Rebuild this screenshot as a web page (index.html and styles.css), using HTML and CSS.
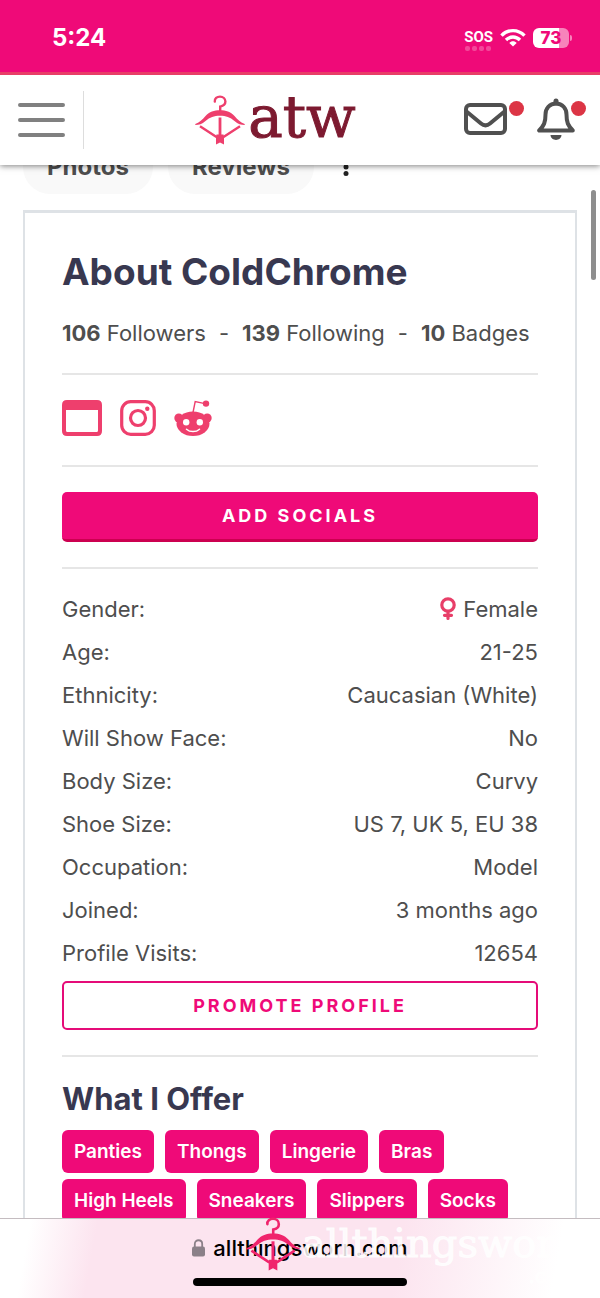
FILE: index.html
```html
<!DOCTYPE html>
<html lang="en">
<head>
    <meta charset="UTF-8">
    <meta name="viewport" content="width=device-width, initial-scale=1.0">
    <title>About ColdChrome</title>
    <link rel="stylesheet" href="styles.css">
</head>
<body>
    <svg class="defs" aria-hidden="true">
        <symbol id="bow" viewBox="0 0 50 50">
            <path d="M19.800 6.600C19.400 3.600 22 1.600 25 1.600C28 1.600 30.400 3.800 30.400 6.600C30.400 9.600 28.200 11 25.200 11.600V17" fill="none" stroke="currentColor" stroke-width="2.400" stroke-linecap="round"/>
            <path d="M.3 29C5 27 7.500 24.500 10.500 21C14.500 16.800 19 15.200 25 15.200S35.500 16.800 39.500 21C42.500 24.500 45 27 49.700 29V30C46 30 43 29 39.500 26C35 22.300 31 20.800 25 20.800S15 22.300 10.500 26C7 29 4 30 .3 30Z" fill="currentColor"/>
            <path d="M5 31.200L21.500 42M45 31.200L28.500 42" fill="none" stroke="currentColor" stroke-width="2.400"/>
            <path d="M25 22.500V42" fill="none" stroke="currentColor" stroke-width="2.800"/>
            <path d="M21.500 39.500H28.500L29 41.500V49.500L25 47.500L21 49.500V41.500Z" fill="currentColor"/>
        </symbol>
    </svg>

    <header>
        <div class="status-bar">
            <span class="time">5:24</span>
            <div class="status-icons">
                <div class="sos">
                    <span>SOS</span>
                    <svg width="28" height="5" viewBox="0 0 28 5" fill="#fff" opacity=".25"><rect x="1" width="5" height="5" rx="2"/><rect x="8" width="5" height="5" rx="2"/><rect x="15" width="5" height="5" rx="2"/><rect x="22" width="5" height="5" rx="2"/></svg>
                </div>
                <svg width="26" height="20" viewBox="0 0 26 20" fill="none" stroke="#fff" stroke-width="3.400">
                    <path d="M1.500 7.600C8 .9 18 .9 24.500 7.600"/>
                    <path d="M6 12C10 8 16 8 20 12"/>
                    <path d="M13 18.500L9.300 14.900C11.300 12.800 14.700 12.800 16.700 14.900Z" fill="#fff" stroke="none"/>
                </svg>
                <div class="battery"><span>73</span></div>
            </div>
        </div>
        <nav class="navbar">
            <button class="menu-btn" aria-label="Menu">
                <svg width="47" height="36" viewBox="0 0 47 36" stroke="#808080" stroke-width="4" stroke-linecap="round"><path d="M2 3H45M2 18H45M2 33H45"/></svg>
            </button>
            <a class="logo" href="#">
                <svg width="50" height="50"><use href="#bow"/></svg>
                <span>atw</span>
            </a>
            <div class="nav-actions">
                <a class="notify" href="#" aria-label="Messages">
                    <svg width="43" height="44" viewBox="0 0 43 44" fill="none" stroke="#505050" stroke-width="4">
                        <rect x="2" y="7" width="39" height="28" rx="4"/>
                        <path d="M2.500 13.500L17 25.500C20 28 23 28 26 25.500L40.500 13.500"/>
                    </svg>
                </a>
                <a class="notify" href="#" aria-label="Notifications">
                    <svg width="38" height="44" viewBox="0 0 38 44" fill="none" stroke="#505050" stroke-width="4">
                        <path d="M19 5.500C12.500 5.500 8.500 10.500 8.500 16.500C8.500 24.500 7 27.500 2.200 32.500H35.800C31 27.500 29.500 24.500 29.500 16.500C29.500 10.500 25.500 5.500 19 5.500Z" stroke-linejoin="round"/>
                        <path d="M19 5V3" stroke-width="5" stroke-linecap="round"/>
                        <path d="M13.500 37H24.500C24 43.500 14 43.500 13.500 37Z" fill="#505050" stroke="none"/>
                    </svg>
                </a>
            </div>
        </nav>
    </header>

    <main>
        <div class="tabs">
            <a href="#">Photos</a>
            <a href="#">Reviews</a>
            <button class="more-btn" aria-label="More">
                <svg width="6" height="18" viewBox="0 0 6 18" fill="#222"><circle cx="3" cy="2.500" r="2.500"/><circle cx="3" cy="9" r="2.500"/><circle cx="3" cy="15.500" r="2.500"/></svg>
            </button>
        </div>

        <section class="card">
            <h1>About ColdChrome</h1>
            <p class="stats"><span><b>106</b> Followers</span><span>-</span><span><b>139</b> Following</span><span>-</span><span><b>10</b> Badges</span></p>
            <hr>
            <div class="socials">
                <a href="#" aria-label="Website">
                    <svg width="40" height="36" viewBox="0 0 40 36"><path d="M5 0H35Q40 0 40 5V31Q40 36 35 36H5Q0 36 0 31V5Q0 0 5 0ZM4 10V30.500Q4 32 5.500 32H34.500Q36 32 36 30.500V10Z" fill="currentColor" fill-rule="evenodd"/></svg>
                </a>
                <a href="#" aria-label="Instagram">
                    <svg width="36" height="36" viewBox="0 0 36 36" fill="none" stroke="currentColor" stroke-width="3.200"><rect x="1.700" y="1.700" width="32.600" height="32.600" rx="9"/><circle cx="18" cy="18" r="7.500"/><circle cx="27.300" cy="8.700" r="2.200" fill="currentColor" stroke="none"/></svg>
                </a>
                <a href="#" aria-label="Reddit">
                    <svg width="38" height="36" viewBox="0 0 38 36" fill="currentColor">
                        <path d="M19 12.500L21.200 1.600L31 3.600" fill="none" stroke="currentColor" stroke-width="1.400"/>
                        <circle cx="32" cy="3.600" r="3.200"/>
                        <circle cx="4.800" cy="18" r="4.500"/><circle cx="33.200" cy="18" r="4.500"/>
                        <ellipse cx="19" cy="23.800" rx="16.500" ry="12.200"/>
                        <g fill="#fff"><circle cx="12.200" cy="22.200" r="3.200"/><circle cx="25.800" cy="22.200" r="3.200"/></g>
                        <path d="M12.500 29.200C16 32.400 22 32.400 25.500 29.200" fill="none" stroke="#fff" stroke-width="1.500" stroke-linecap="round"/>
                    </svg>
                </a>
            </div>
            <hr>
            <button class="btn btn-primary">Add Socials</button>
            <hr>
            <dl class="details">
                <div><dt>Gender:</dt><dd><svg width="16" height="24" viewBox="0 0 16 24" fill="none" stroke="#e83e68" stroke-width="3.200"><circle cx="8" cy="8" r="6.200"/><path d="M8 14.500V21.500M4.500 18.300H11.500" stroke-linecap="round"/></svg>Female</dd></div>
                <div><dt>Age:</dt><dd>21-25</dd></div>
                <div><dt>Ethnicity:</dt><dd>Caucasian (White)</dd></div>
                <div><dt>Will Show Face:</dt><dd>No</dd></div>
                <div><dt>Body Size:</dt><dd>Curvy</dd></div>
                <div><dt>Shoe Size:</dt><dd>US 7, UK 5, EU 38</dd></div>
                <div><dt>Occupation:</dt><dd>Model</dd></div>
                <div><dt>Joined:</dt><dd>3 months ago</dd></div>
                <div><dt>Profile Visits:</dt><dd>12654</dd></div>
            </dl>
            <button class="btn btn-outline">Promote Profile</button>
            <hr>
            <h2>What I Offer</h2>
            <div class="tags">
                <a href="#">Panties</a>
                <a href="#">Thongs</a>
                <a href="#">Lingerie</a>
                <a href="#">Bras</a>
                <a href="#">High Heels</a>
                <a href="#">Sneakers</a>
                <a href="#">Slippers</a>
                <a href="#">Socks</a>
            </div>
        </section>
        <div class="scroll-thumb"></div>
    </main>

    <footer>
        <div class="address">
            <svg width="13" height="18" viewBox="0 0 13 18"><rect y="7.500" width="13" height="10" rx="2" fill="#8b8088"/><path d="M2.800 8V5C2.800 0 10.200 0 10.200 5V8" fill="none" stroke="#8b8088" stroke-width="1.800"/></svg>
            <span>allthingsworn.com</span>
        </div>
        <div class="home-bar"></div>
        <div class="watermark">
            <svg width="54" height="54"><use href="#bow"/></svg>
            <div class="watermark-text">allthingsworn<small>.com</small></div>
        </div>
    </footer>
</body>
</html>
```
FILE: styles.css
```css
* {
    box-sizing: border-box;
}
body {
    display: flex;
    flex-direction: column;
    height: 100vh;
    margin: 0;
    overflow: hidden;
    background: #fff;
    color: #4e4e4e;
    font-family: Inter, sans-serif;
    font-size: 22px;
    line-height: 30px;
}
a {
    color: inherit;
    text-decoration: none;
}
button {
    padding: 0;
    border: none;
    background: none;
    font-family: inherit;
    cursor: pointer;
}
svg {
    display: block;
    flex: none;
}
.defs {
    position: absolute;
    width: 0;
    height: 0;
}

/* Header */
header {
    position: relative;
    z-index: 1;
    flex: none;
    background: #fff;
    box-shadow: 0 1px 6px rgba(0, 0, 0, 0.5);
}
.status-bar {
    display: flex;
    justify-content: space-between;
    align-items: center;
    height: 75px;
    padding: 4px 31px 0 52px;
    border-bottom: 3px solid #e83e68;
    background: #ef0a78;
    color: #fff;
}
.time {
    font-size: 24px;
    font-weight: 700;
}
.status-icons {
    display: flex;
    align-items: center;
    gap: 7px;
}
.sos {
    padding-top: 3px;
    font-family: Roboto, sans-serif;
    font-size: 15px;
    font-weight: 700;
    line-height: 17px;
}
.battery {
    position: relative;
    width: 36px;
    height: 20px;
    border-radius: 6px;
    background: linear-gradient(90deg, #fff 73%, #f784bb 73%);
    color: #ef0a78;
    font-size: 17px;
    font-weight: 800;
    line-height: 20px;
    text-align: center;
}
.battery::after {
    content: "";
    position: absolute;
    top: 7px;
    right: -3px;
    width: 2px;
    height: 6px;
    border-radius: 0 2px 2px 0;
    background: #f784bb;
}
.navbar {
    display: flex;
    align-items: center;
    height: 90px;
    padding: 0 25px 0 18px;
}
.menu-btn {
    display: flex;
    align-items: center;
    width: 66px;
    height: 58px;
    border-right: 1px solid #ddd;
}
.logo {
    display: flex;
    flex: 1;
    align-items: center;
    justify-content: center;
    gap: 3px;
    padding-left: 3px;
    color: #ee3f6d;
}
.logo span {
    padding-bottom: 7px;
    color: #7d1a30;
    font-family: "DejaVu Serif", serif;
    font-size: 58px;
    line-height: 56px;
    -webkit-text-stroke: 1px #7d1a30;
}
.nav-actions {
    display: flex;
    gap: 30px;
}
.notify {
    position: relative;
}
.notify::after {
    content: "";
    position: absolute;
    top: 3px;
    left: calc(100% + 2px);
    width: 15px;
    height: 15px;
    border-radius: 50%;
    background: #dc3545;
}
.notify:last-child::after {
    left: calc(100% - 4px);
}

/* Profile */
main {
    position: relative;
    flex: 1;
    min-height: 0;
    overflow: hidden;
}
.tabs {
    display: flex;
    align-items: center;
    gap: 15px;
    margin: -25px 23px 16px;
}
.tabs a {
    padding: 12px 24px;
    border-radius: 27px;
    background: #f9f9f9;
    font-size: 24px;
    font-weight: 700;
}
.more-btn {
    padding: 0 14px;
}
.card {
    margin: 0 23px;
    padding: 36px 37px;
    border: 2px solid #dee2e6;
    border-top-width: 3px;
}
h1, h2 {
    margin: 0;
    color: #383850;
}
h1 {
    margin-bottom: 23px;
    font-size: 37px;
    line-height: 46px;
}
h2 {
    margin-bottom: 14px;
    font-size: 31px;
    line-height: 34px;
}
.stats {
    display: flex;
    gap: 13px;
    margin: 0;
}
hr {
    height: 2px;
    margin: 25px 0;
    border: none;
    background: #e6e6e6;
}
.socials {
    display: flex;
    gap: 18px;
    height: 40px;
    color: #ee3f6d;
}
.btn {
    display: block;
    width: 100%;
    border-radius: 5px;
    font-size: 18px;
    font-weight: 700;
    letter-spacing: 3px;
    text-transform: uppercase;
}
.btn-primary {
    height: 50px;
    border-bottom: 3px solid #cc0050;
    background: #ef0a78;
    color: #fff;
}
.btn-outline {
    height: 49px;
    border: 2px solid #e50c78;
    color: #ef0a78;
}
.details {
    display: flex;
    flex-direction: column;
    gap: 13px;
    margin: 0 0 13px;
}
.details div {
    display: flex;
    justify-content: space-between;
}
.details dd {
    display: flex;
    align-items: center;
    gap: 7px;
    margin: 0;
}
.tags {
    display: flex;
    flex-wrap: wrap;
    gap: 6px 11px;
}
.tags a {
    padding: 0 12px;
    border-radius: 6px;
    background: #ef0a78;
    color: #fff;
    font-size: 19px;
    font-weight: 600;
    line-height: 43px;
}
.scroll-thumb {
    position: absolute;
    top: 25px;
    right: 4px;
    width: 5px;
    height: 90px;
    border-radius: 3px;
    background: #8e8e8e;
}

/* Browser bar */
footer {
    position: relative;
    display: flex;
    flex: none;
    flex-direction: column;
    align-items: center;
    height: 80px;
    padding-top: 14px;
    border-top: 1px solid #c4bcc0;
    background: linear-gradient(100deg, #fff 5%, #fce4ef 16%, #fce4ef 66%, #fff 92%);
}
.address {
    display: flex;
    align-items: center;
    gap: 8px;
    color: #000;
    font-weight: 500;
}
.home-bar {
    width: 214px;
    height: 8px;
    margin-top: 15px;
    border-radius: 4px;
    background: #000;
}
.watermark {
    position: absolute;
    top: -2px;
    left: 246px;
    display: flex;
    gap: 2px;
    color: #f0246c;
}
.watermark-text {
    color: rgba(255, 255, 255, 0.85);
    font-family: "DejaVu Serif", serif;
    font-size: 40px;
    line-height: 52px;
    -webkit-text-stroke: 1px rgba(255, 255, 255, 0.85);
}
.watermark-text small {
    display: block;
    margin-right: 4px;
    font-size: 20px;
    line-height: 14px;
    text-align: right;
}
```
